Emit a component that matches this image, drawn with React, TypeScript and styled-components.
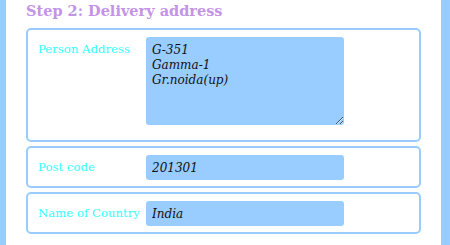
import styled, { createGlobalStyle } from 'styled-components';

const GlobalStyle = createGlobalStyle`
  html, body {
    margin: 0;
    padding: 0;
    background: #ffffff;
  }
  body {
    font-family: 'DejaVu Serif', 'Liberation Serif', serif;
  }
`;

const Page = styled.div`
  width: 450px;
  height: 245px;
  box-sizing: border-box;
  background: #ffffff;
  border-left: 6px solid #99ccff;
  border-right: 9px solid #99ccff;
  padding: 0 20px 0 20px;
  overflow: hidden;
`;

const Heading = styled.h2`
  margin: 0;
  padding: 2px 0 0 0;
  height: 26px;
  font-family: 'DejaVu Serif', serif;
  font-size: 14.5px;
  font-weight: bold;
  color: #c493e6;
  line-height: 18px;
`;

const Fieldset = styled.div`
  display: flex;
  flex-direction: column;
  gap: 4px;
  width: 395px;
`;

const Row = styled.div<{ $tall?: boolean }>`
  box-sizing: border-box;
  display: flex;
  align-items: flex-start;
  border: 2px solid #99ccff;
  border-radius: 5px;
  padding: ${(p) => (p.$tall ? '7px 10px 15px 10px' : '7px 10px 6px 10px')};
`;

const Label = styled.label`
  width: 108px;
  flex: none;
  font-family: 'DejaVu Serif', serif;
  font-size: 11.7px;
  color: #33ffff;
  padding-top: 5px;
`;

const fieldBase = `
  box-sizing: border-box;
  width: 198px;
  border: none;
  border-radius: 3px;
  background: #99ccff;
  font-family: 'DejaVu Serif', serif;
  font-style: italic;
  font-size: 12px;
  color: #111111;
  padding: 4px 6px;
  outline: none;
`;

const TextArea = styled.textarea`
  ${fieldBase}
  height: 88px;
  padding-top: 6px;
  line-height: 15px;
  resize: both;
  display: block;
`;

const Input = styled.input`
  ${fieldBase}
  height: 25px;
  display: block;
`;

export default function App() {
  return (
    <>
      <GlobalStyle />
      <Page>
        <Heading>Step 2: Delivery address</Heading>
        <Fieldset>
          <Row $tall>
            <Label>Person Address</Label>
            <TextArea defaultValue={'G-351\nGamma-1\nGr.noida(up)'} />
          </Row>
          <Row>
            <Label>Post code</Label>
            <Input defaultValue="201301" />
          </Row>
          <Row>
            <Label>Name of Country</Label>
            <Input defaultValue="India" />
          </Row>
        </Fieldset>
      </Page>
    </>
  );
}
